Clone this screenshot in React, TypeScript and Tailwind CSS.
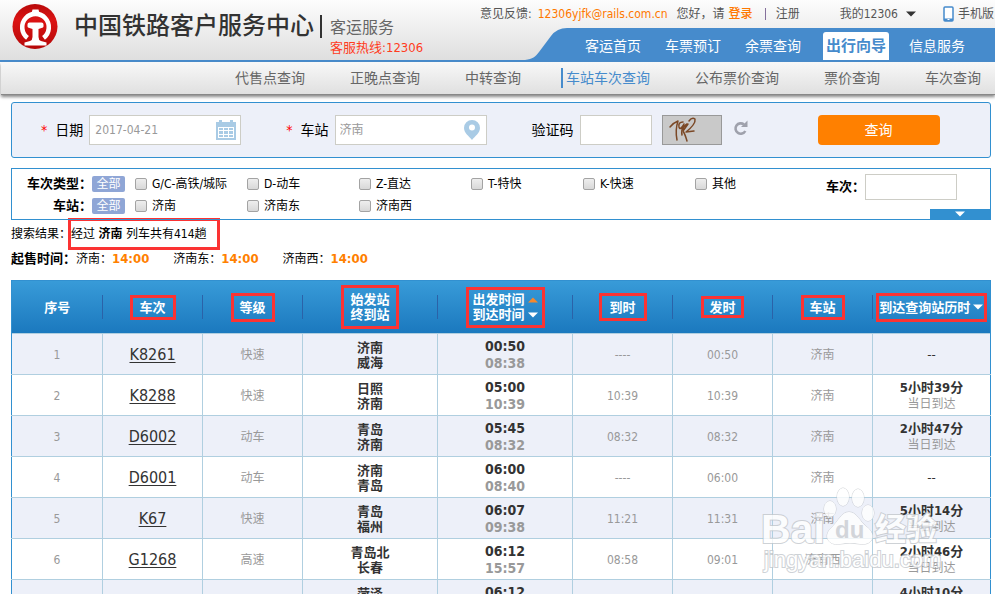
import React, { useState } from 'react';

type Train = {
    code: string;
    kind: string;
    from: string;
    to: string;
    start: string;
    end: string;
    arrive: string;
    depart: string;
    station: string;
    duration: string;
};

const mainNav = ['客运首页', '车票预订', '余票查询', '出行向导', '信息服务'];
const subNav = ['代售点查询', '正晚点查询', '中转查询', '车站车次查询', '公布票价查询', '票价查询', '车次查询'];
const trainTypes = ['G/C-高铁/城际', 'D-动车', 'Z-直达', 'T-特快', 'K-快速', '其他'];
const stations = ['济南', '济南东', '济南西'];

const trains: Train[] = [
    { code: 'K8261', kind: '快速', from: '济南', to: '威海', start: '00:50', end: '08:38', arrive: '----', depart: '00:50', station: '济南', duration: '' },
    { code: 'K8288', kind: '快速', from: '日照', to: '济南', start: '05:00', end: '10:39', arrive: '10:39', depart: '10:39', station: '济南', duration: '5小时39分' },
    { code: 'D6002', kind: '动车', from: '青岛', to: '济南', start: '05:45', end: '08:32', arrive: '08:32', depart: '08:32', station: '济南', duration: '2小时47分' },
    { code: 'D6001', kind: '动车', from: '济南', to: '青岛', start: '06:00', end: '08:40', arrive: '----', depart: '06:00', station: '济南', duration: '' },
    { code: 'K67', kind: '快速', from: '青岛', to: '福州', start: '06:07', end: '09:38', arrive: '11:21', depart: '11:31', station: '济南', duration: '5小时14分' },
    { code: 'G1268', kind: '高速', from: '青岛北', to: '长春', start: '06:12', end: '15:57', arrive: '08:58', depart: '09:01', station: '济南西', duration: '2小时46分' },
    { code: 'K1068', kind: '快速', from: '菏泽', to: '青岛', start: '06:12', end: '14:20', arrive: '10:22', depart: '10:30', station: '济南', duration: '4小时10分' },
];

function RailLogo() {
    return (
        <svg className="size-[46px] shrink-0" viewBox="0 0 46 46" aria-hidden="true">
            <defs>
                <linearGradient id="rail" x1="0" y1="0" x2="0" y2="1">
                    <stop offset="0" stopColor="#b80a0a" />
                    <stop offset="0.35" stopColor="#dc1414" />
                    <stop offset="1" stopColor="#b40808" />
                </linearGradient>
            </defs>
            <circle cx="23" cy="22.500" r="22.5" fill="url(#rail)" />
            <path d="M15.500 33.800A13.300 13.300 0 1 1 31.500 33.800" fill="none" stroke="#fff" strokeWidth="4.600" />
            <path d="M20.500 5.500h6l1 4h-8z" fill="#fff" />
            <path d="M15.500 20.500Q15.500 18.500 17.500 18.500H29.500Q31.500 18.500 31.500 20.500V22.500Q31.500 23.500 29.500 24L26.500 25V33Q26.500 36 29 37L34.500 38.500V41.500H12.500V38.500L18 37Q20.500 36 20.500 33V25L17.500 24Q15.500 23.500 15.500 22.500z" fill="#fff" />
        </svg>
    );
}

function CalendarIcon() {
    return (
        <svg className="pointer-events-none h-5 w-5 shrink-0" viewBox="0 0 20 20" fill="#a9cbe5" aria-hidden="true">
            <path d="M0 2h3V0h3v2h8V0h3v2h3v18H0z" />
            <path d="M2 7h16v11H2z" fill="#fff" />
            <path d="M3 8h4v2H3zM8 8h4v2H8zM13 8h4v2h-4zM3 11h4v3H3zM8 11h4v3H8zM13 11h4v3h-4zM3 15h4v2H3zM8 15h4v2H8zM13 15h4v2h-4z" />
        </svg>
    );
}

function PinIcon() {
    return (
        <svg className="pointer-events-none h-5 w-4 shrink-0" viewBox="0 0 16 20" aria-hidden="true">
            <path d="M8 0a8 8 0 0 1 8 8c0 5-5 8-8 12C5 16 0 13 0 8a8 8 0 0 1 8-8zm0 4.500a3 3 0 1 0 0 6 3 3 0 0 0 0-6z" fill="#a9cbe5" fillRule="evenodd" />
        </svg>
    );
}

function Arrow({ up = false, className = '' }: { up?: boolean; className?: string }) {
    return (
        <svg className={`h-[6px] w-[10px] shrink-0 ${className}`} viewBox="0 0 10 6" fill="currentColor" aria-hidden="true">
            <path d={up ? 'M0 5.500h10L5 .5z' : 'M0 .5h10L5 5.500z'} />
        </svg>
    );
}

function Header() {
    return (
        <header>
            <div className="flex h-[62px] justify-between border-b-2 border-[#468bcc] bg-linear-to-b from-[#fdfdfd] to-[#dfdfdf] whitespace-nowrap">
                <div className="flex items-start pl-[12px]">
                    <div className="pt-[4px]"><RailLogo /></div>
                    <h1 className="pt-3 pl-4 text-[24px] leading-[28px] font-medium text-[#333]">中国铁路客户服务中心</h1>
                    <div className="mt-[15px] ml-[6px] h-[23px] w-[2px] bg-[#333]" />
                    <div className="pt-[18px] pl-2">
                        <div className="text-[16px] leading-5 text-[#666]">客运服务</div>
                        <div className="text-[13px] leading-5 text-[#ff3c1e]">客服热线:12306</div>
                    </div>
                </div>
                <div className="flex flex-col items-end">
                    <div className="flex h-7 items-center pr-px text-[12px] leading-4 text-[#555]">
                        <span>意见反馈:</span>
                        <a href="#mail" className="ml-[6px] text-[#ff7800]">12306yjfk@rails.com.cn</a>
                        <span className="ml-[9px]">您好，请</span>
                        <a href="#login" className="ml-[4px] font-medium text-[#ff7800]">登录</a>
                        <span className="ml-3 h-3 w-px bg-[#85709c]" />
                        <a href="#register" className="ml-[10px]">注册</a>
                        <button className="ml-10 flex items-center gap-2">我的12306 <Arrow className="text-[#333]" /></button>
                        <a href="#mobile" className="ml-[27px] flex items-center gap-[4px]">
                            <svg className="h-4 w-[11px]" viewBox="0 0 11 16" aria-hidden="true">
                                <rect x="1" y="1" width="9" height="14" rx="1" fill="#fff" stroke="#468bcc" strokeWidth="1.500" />
                                <path d="M1 12.500h9V15H1z" fill="#468bcc" />
                                <path d="M4.500 13.500h2" stroke="#fff" />
                            </svg>
                            手机版
                        </a>
                    </div>
                    <div className="flex h-8">
                        <svg className="h-8 w-[42px]" viewBox="0 0 42 32" aria-hidden="true">
                            <path d="M0 32C8 31 10 29 14 24L26 8Q32 0 42 0V32z" fill="#468bcc" />
                        </svg>
                        <nav className="flex items-end gap-5 bg-[#468bcc] pr-7 pl-4 text-[14px] text-white">
                            {mainNav.map(item =>
                                item === '出行向导' ? (
                                    <a key={item} href="#guide" className="-mr-[2px] flex h-7 items-center rounded-t-[3px] bg-white px-[3px] text-[15px] font-bold text-[#468bcc]">{item}</a>
                                ) : (
                                    <a key={item} href="#nav" className="flex h-7 items-center px-[2px]">{item}</a>
                                )
                            )}
                        </nav>
                    </div>
                </div>
            </div>
            <nav className="ml-px flex h-[33px] items-center justify-end gap-[45px] border-b border-[#888] bg-linear-to-b from-[#f8f8f8] to-[#e0e0e0] pr-[14px] text-[14px] leading-5 whitespace-nowrap text-[#666] shadow-[0_2px_3px_#888]">
                {subNav.map(item => (
                    <a key={item} href="#sub" className={item === '车站车次查询' ? '-ml-[5px] border-l-2 border-[#468bcc] pl-[3px] text-[#468bcc]' : ''}>{item}</a>
                ))}
            </nav>
        </header>
    );
}

function SearchForm() {
    return (
        <form className="mt-[7px] flex h-14 items-center rounded-[3px] border border-[#3290d0] bg-[#edf0f9] pl-[29px] text-[14px] whitespace-nowrap text-black" onSubmit={e => e.preventDefault()}>
            <label htmlFor="date" className="flex items-center"><span className="mr-2 text-[#f00]">*</span>日期</label>
            <div className="ml-[6px] flex h-[30px] w-[152px] items-center border border-[#cdcdc6] bg-white pr-1 pl-[5px]">
                <input id="date" defaultValue="2017-04-21" className="min-w-0 flex-1 text-[12px] text-[#999] outline-none" />
                <CalendarIcon />
            </div>
            <label htmlFor="station" className="ml-[45px] flex items-center"><span className="mr-2 text-[#f00]">*</span>车站</label>
            <div className="ml-[6px] flex h-[30px] w-[152px] items-center border border-[#cdcdc6] bg-white pr-[6px] pl-1">
                <input id="station" defaultValue="济南" className="min-w-0 flex-1 text-[12px] text-[#999] outline-none" />
                <PinIcon />
            </div>
            <label htmlFor="captcha" className="ml-[45px]">验证码</label>
            <input id="captcha" className="ml-[6px] h-[30px] w-[72px] border border-[#cdcdc6] bg-white px-1" />
            <svg className="ml-[10px] h-[30px] w-[60px] shrink-0" viewBox="0 0 60 30" role="img" aria-label="验证码图片">
                <rect x="0.500" y="0.500" width="59" height="29" fill="#c9c9c9" stroke="#999" />
                <g fill="none" stroke="#7b4826" strokeWidth="1.500" strokeLinecap="round" strokeLinejoin="round">
                    <path d="M8 12Q11 8 16 6Q13 15 15 25" />
                    <path d="M21 7Q16 7 17 12Q18 16 22 9Q19 15 20 20" />
                    <path d="M25 9Q20 12 21 16Q23 19 25 26M21 16L26 9" />
                    <path d="M27 6Q30 2 33 4Q34 9 24 17L32 16" />
                </g>
            </svg>
            <button type="button" aria-label="刷新验证码" className="-mt-[4px] ml-[11px]">
                <svg className="h-4 w-[15px]" viewBox="0 0 15 16" aria-hidden="true">
                    <path d="M11 4.500A5.200 5.200 0 1 0 12.300 11" fill="none" stroke="#9fa1ac" strokeWidth="2.600" />
                    <path d="M14.500 0.500V7H8z" fill="#9fa1ac" />
                </svg>
            </button>
            <button type="submit" className="ml-[70px] h-[30px] w-[122px] rounded-[4px] bg-[#ff8000] text-white">查询</button>
        </form>
    );
}

function FilterRow({ title, options }: { title: string; options: string[] }) {
    return (
        <div role="group" aria-label={title} className="flex h-[22px] items-center">
            <span className="w-20 text-right text-[13px] font-bold">{title}：</span>
            <button type="button" className="h-4 w-[33px] rounded-[2px] bg-[#8fa6d6] text-[12px] leading-4 text-white">全部</button>
            <div className="flex pl-[10px]">
                {options.map(option => (
                    <label key={option} className="flex w-28 items-center gap-[5px]">
                        <input type="checkbox" className="size-3 shrink-0 appearance-none rounded-[2px] border border-[#a3a3a3] bg-linear-to-b from-[#eee] to-[#d8d8d8] checked:bg-[#3290d0]" />
                        {option}
                    </label>
                ))}
            </div>
        </div>
    );
}

function Filters() {
    const [expanded, setExpanded] = useState(false);

    return (
        <section className="relative mt-[10px] flex min-h-[52px] justify-between border border-[#3290d0] text-[12px] leading-4 whitespace-nowrap text-black">
            <div className="pt-[4px]">
                <FilterRow title="车次类型" options={trainTypes} />
                <FilterRow title="车站" options={stations} />
            </div>
            <div className="flex items-start pt-[5px] pr-[33px]">
                <label htmlFor="trainNo" className="text-[13px] leading-[26px] font-bold">车次：</label>
                <input id="trainNo" className="h-[26px] w-[92px] border border-[#cdcdc6] px-1" />
            </div>
            <button
                type="button"
                aria-label="更多条件"
                aria-expanded={expanded}
                onClick={() => setExpanded(!expanded)}
                className="absolute right-0 bottom-0 flex h-[10px] w-[60px] items-center justify-center bg-[#3290d0] text-white"
            >
                <Arrow up={expanded} />
            </button>
        </section>
    );
}

function Summary() {
    return (
        <div className="pt-px text-[12px] leading-4 whitespace-nowrap text-black">
            <div className="flex h-[25px] items-center">
                <span>搜索结果：</span>
                <span className="-ml-[3px] flex h-8 w-[152px] shrink-0 items-center border-[3px] border-[#fb3333]">
                    <span>经过 <b>济南</b> 列车共有414趟</span>
                </span>
            </div>
            <div className="flex h-[25px] items-center">
                <b className="text-[13px]">起售时间：</b>
                {stations.map(name => (
                    <span key={name} className="mr-6">{name}：<b className="text-[13px] text-[#ff8000]">14:00</b></span>
                ))}
            </div>
        </div>
    );
}

const mark = 'inline-flex items-center justify-center border-[3px] border-[#fb3333]';
const divider = 'relative before:absolute before:top-[14px] before:-left-px before:h-6 before:w-px before:bg-[#2b62a8]';

function ResultTable() {
    return (
        <table className="w-full table-fixed border-collapse border border-[#3290d0] text-center text-[12px] leading-4 whitespace-nowrap text-[#999]">
            <colgroup>
                <col className="w-[91px]" />
                <col className="w-[100px]" />
                <col className="w-[100px]" />
                <col className="w-[135px]" />
                <col className="w-[135px]" />
                <col className="w-[100px]" />
                <col className="w-[100px]" />
                <col className="w-[100px]" />
                <col />
            </colgroup>
            <thead>
                <tr className="h-[53px] bg-linear-to-b from-[#389bd8] to-[#1a78be] text-[13px] leading-[15px] text-white [&>th]:p-0 [&>th]:align-middle">
                    <th>序号</th>
                    <th className={divider}><span className={`${mark} h-[25px] w-[46px]`}>车次</span></th>
                    <th className={divider}><span className={`${mark} h-[29px] w-[44px]`}>等级</span></th>
                    <th className={divider}><span className={`${mark} h-11 w-[58px]`}>始发站<br />终到站</span></th>
                    <th className={divider}>
                        <span className={`${mark} h-[41px] w-[79px] flex-col`}>
                            <span className="flex items-center gap-[3px]">出发时间<Arrow up className="text-[#f6882c]" /></span>
                            <span className="flex items-center gap-[3px]">到达时间<Arrow /></span>
                        </span>
                    </th>
                    <th className={divider}><span className={`${mark} h-[28px] w-[48px]`}>到时</span></th>
                    <th className={divider}><span className={`${mark} h-[22px] w-[43px]`}>发时</span></th>
                    <th className={divider}><span className={`${mark} h-[25px] w-[44px]`}>车站</span></th>
                    <th className={divider}><span className={`${mark} h-[29px] w-[111px] gap-[3px]`}>到达查询站历时<Arrow /></span></th>
                </tr>
            </thead>
            <tbody>
                {trains.map((t, i) => (
                    <tr key={t.code} className="h-[41px] odd:bg-[#edf0f9] [&>td]:border [&>td]:border-[#b0cfe0] [&>td]:p-0 [&>td]:pt-[2px] [&>td:first-child]:border-l-[#3290d0] [&>td:last-child]:border-r-[#3290d0]">
                        <td>{i + 1}</td>
                        <td><a href="#train" className="text-[16px] text-[#333] underline underline-offset-2">{t.code}</a></td>
                        <td>{t.kind}</td>
                        <td className="text-[13px] leading-[15px] font-bold text-[#333]">
                            <div>{t.from}</div>
                            <div>{t.to}</div>
                        </td>
                        <td className="text-[14px] leading-[17px] font-bold">
                            <div className="text-[#333]">{t.start}</div>
                            <div>{t.end}</div>
                        </td>
                        <td>{t.arrive}</td>
                        <td>{t.depart}</td>
                        <td>{t.station}</td>
                        <td>
                            {t.duration ? (
                                <>
                                    <div className="text-[13px] font-bold text-[#333]">{t.duration}</div>
                                    <div>当日到达</div>
                                </>
                            ) : (
                                <span className="text-[13px] text-[#333]">--</span>
                            )}
                        </td>
                    </tr>
                ))}
            </tbody>
        </table>
    );
}

function Watermark() {
    return (
        <svg className="pointer-events-none absolute right-[52px] bottom-[14px] h-[94px] w-[182px]" viewBox="0 0 182 94" role="img" aria-label="Baidu 经验">
            <g fill="#fff" stroke="#c3c7cc" opacity="0.8" paintOrder="stroke">
                <g strokeWidth="1">
                    <ellipse cx="82" cy="11" rx="6" ry="9" />
                    <ellipse cx="97" cy="12" rx="6" ry="9" />
                    <ellipse cx="69" cy="23" rx="6" ry="8" />
                    <ellipse cx="107" cy="27" rx="6" ry="8" />
                    <path d="M88 26C96 26 98 35 106 41C117 50 110 60 99 58Q89 56 79 58C67 60 62 50 70 42C78 35 80 26 88 26z" />
                </g>
                <g strokeWidth="2">
                    <text x="0" y="57" fontSize="41" fontWeight="700" fontFamily="Liberation Sans">Bai</text>
                    <text x="114" y="54" fontSize="31" fontWeight="700" fontFamily="Noto Sans CJK SC">经验</text>
                    <text x="3" y="81" fontSize="22" fontFamily="Liberation Sans">jingyan.baidu.com</text>
                </g>
            </g>
            <text x="74" y="52" fontSize="24" fontWeight="700" fontFamily="Liberation Sans" fill="#d2d5da">du</text>
        </svg>
    );
}

export default function App() {
    return (
        <div className="relative h-screen overflow-hidden bg-white font-['DejaVu_Sans_Condensed','Noto_Sans_CJK_SC',sans-serif]">
            <Header />
            <main className="pr-[4px] pl-[11px]">
                <SearchForm />
                <Filters />
                <Summary />
                <div className="mt-[9px]">
                    <ResultTable />
                </div>
            </main>
            <Watermark />
        </div>
    );
}
